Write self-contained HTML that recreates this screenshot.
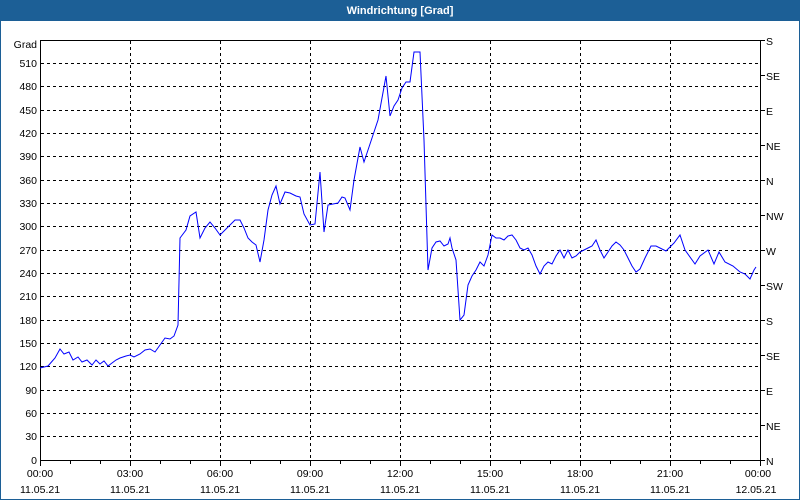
<!DOCTYPE html><html><head><style>body{margin:0;width:800px;height:500px;overflow:hidden;background:#fff}svg{display:block}text{font-family:"Liberation Sans",sans-serif;font-size:10.5px;fill:#000}</style></head><body>
<svg width="800" height="500" viewBox="0 0 800 500">
<rect x="0" y="0" width="800" height="21" fill="#1c5f96"/>
<rect x="0.5" y="0" width="799" height="499.5" fill="none" stroke="#1c5f96" stroke-width="1"/>
<text x="400" y="14" text-anchor="middle" style="fill:#fff;font-weight:bold;font-size:11px">Windrichtung [Grad]</text>
<g stroke="#000" stroke-dasharray="3,3" stroke-width="1">
<path d="M130.5 41V460M220.5 41V460M310.5 41V460M400.5 41V460M490.5 41V460M580.5 41V460M670.5 41V460"/>
<path d="M41 63.5H760M41 86.5H760M41 110.5H760M41 133.5H760M41 156.5H760M41 180.5H760M41 203.5H760M41 226.5H760M41 250.5H760M41 273.5H760M41 296.5H760M41 320.5H760M41 343.5H760M41 366.5H760M41 390.5H760M41 413.5H760M41 436.5H760"/>
</g>
<rect x="40.5" y="40.5" width="720" height="420" fill="none" stroke="#000"/>
<g stroke="#000">
<path d="M70.5 461v3M100.5 461v3M130.5 461v5M160.5 461v3M190.5 461v3M220.5 461v5M250.5 461v3M280.5 461v3M310.5 461v5M340.5 461v3M370.5 461v3M400.5 461v5M430.5 461v3M460.5 461v3M490.5 461v5M520.5 461v3M550.5 461v3M580.5 461v5M610.5 461v3M640.5 461v3M670.5 461v5M700.5 461v3M730.5 461v3M40.5 461v5M760.5 461v5"/>
<path d="M761 40.5h4M761 75.5h4M761 110.5h4M761 145.5h4M761 180.5h4M761 215.5h4M761 250.5h4M761 285.5h4M761 320.5h4M761 355.5h4M761 390.5h4M761 425.5h4M761 460.5h4"/>
</g>
<g text-anchor="end">
<text x="37" y="48">Grad</text>
<text x="37" y="67">510</text><text x="37" y="90">480</text><text x="37" y="114">450</text><text x="37" y="137">420</text><text x="37" y="160">390</text><text x="37" y="184">360</text><text x="37" y="207">330</text><text x="37" y="230">300</text><text x="37" y="254">270</text><text x="37" y="277">240</text><text x="37" y="300">210</text><text x="37" y="324">180</text><text x="37" y="347">150</text><text x="37" y="370">120</text><text x="37" y="394">90</text><text x="37" y="417">60</text><text x="37" y="440">30</text><text x="37" y="464">0</text>
</g>
<g>
<text x="766" y="45">S</text><text x="766" y="80">SE</text><text x="766" y="115">E</text><text x="766" y="150">NE</text><text x="766" y="185">N</text><text x="766" y="220">NW</text><text x="766" y="255">W</text><text x="766" y="290">SW</text><text x="766" y="325">S</text><text x="766" y="360">SE</text><text x="766" y="395">E</text><text x="766" y="430">NE</text><text x="766" y="465">N</text>
</g>
<g text-anchor="middle">
<text x="40" y="477">00:00</text><text x="130" y="477">03:00</text><text x="220" y="477">06:00</text><text x="310" y="477">09:00</text><text x="400" y="477">12:00</text><text x="490" y="477">15:00</text><text x="580" y="477">18:00</text><text x="670" y="477">21:00</text><text x="758" y="477">00:00</text>
<text x="40" y="493">11.05.21</text><text x="130" y="493">11.05.21</text><text x="220" y="493">11.05.21</text><text x="310" y="493">11.05.21</text><text x="400" y="493">11.05.21</text><text x="490" y="493">11.05.21</text><text x="580" y="493">11.05.21</text><text x="670" y="493">11.05.21</text><text x="756" y="493">12.05.21</text>
</g>
<polyline fill="none" stroke="#0000ff" stroke-width="1" points="40,368 48,366 55,358 60,349 64,354 69,352 73,360 78,357 82,362 87,360 92,365 96,360 100,364 104,361 108,366 112,363 116,360 120,358 126,356 130,355 134,357 140,354 145,350 150,349 155,352 160,345 165,338 170,339 174,336 178,325 180,238 186,230 190,216 196,212 200,238 205,228 210,222 215,228 220,235 225,230 230,225 235,220 240,220 244,228 248,238 252,242 256,245 260,262 264,240 268,210 272,195 276,186 280,204 285,192 290,193 296,196 300,197 304,214 310,225 315,224 320,172 324,232 328,205 333,204 338,203 342,197 345,198 350,210 354,180 360,147 364,162 368,150 372,138 378,120 382,98 386,76 390,116 394,106 398,100 402,88 406,82 410,82 414,52 420,52 424,140 428,270 432,248 436,242 440,241 444,246 448,244 450,238 452,248 456,260 460,320 464,315 468,285 472,276 476,270 480,262 484,266 488,255 492,235 496,238 500,238 504,240 508,236 512,235 516,240 520,248 524,250 528,248 532,255 536,266 540,274 544,266 548,262 552,264 556,256 560,250 564,258 568,250 572,258 576,256 580,252 584,250 588,248 592,246 596,240 600,250 604,258 608,252 612,246 616,242 620,245 624,250 628,258 632,266 636,272 640,269 645,258 651,246 656,246 666,251 674,243 680,235 685,250 695,264 700,256 708,250 714,264 719,252 725,262 733,266 740,272 745,274 750,279 754,270 756,267"/>
</svg>
</body></html>
